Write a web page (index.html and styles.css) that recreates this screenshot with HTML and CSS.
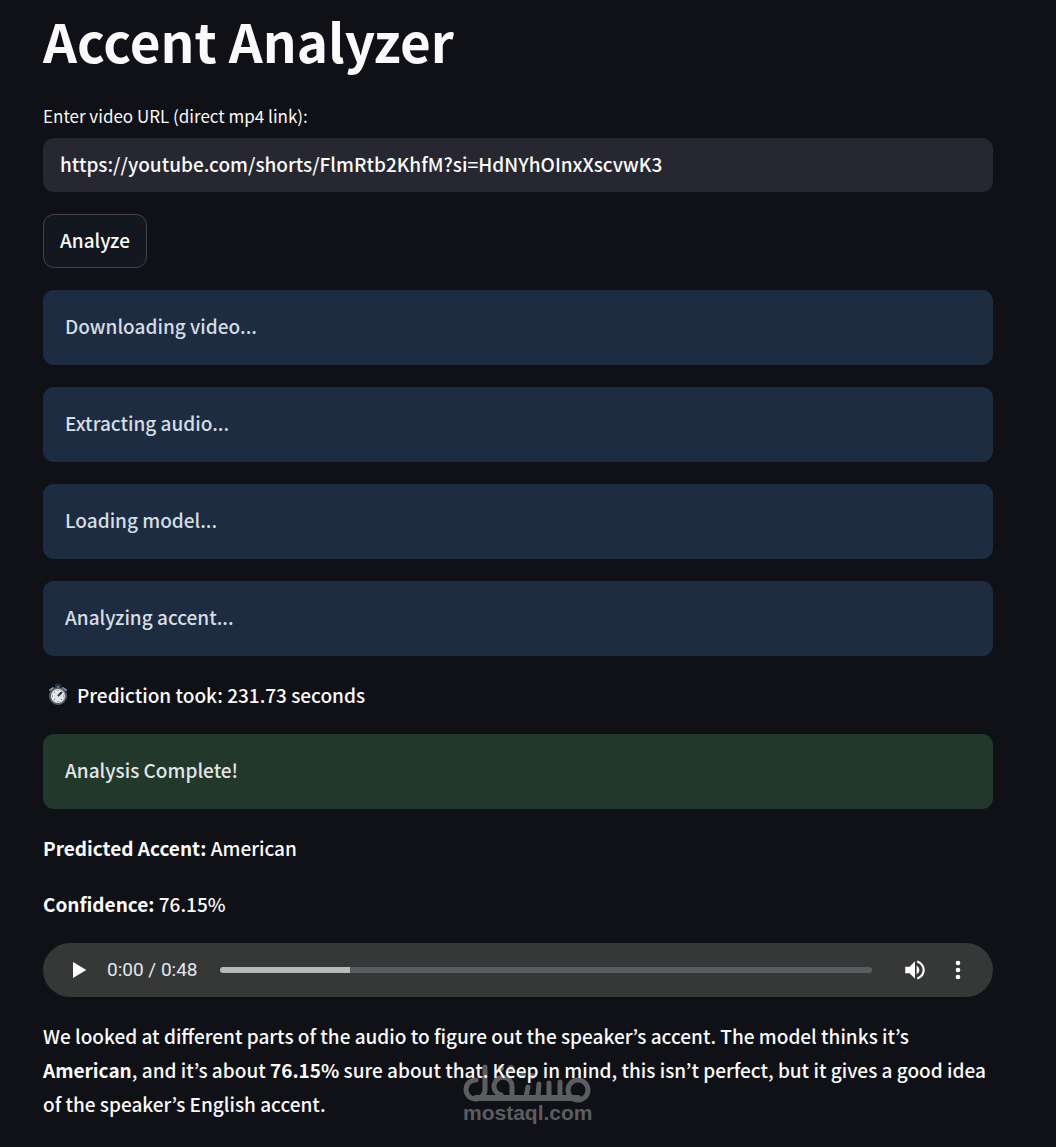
FILE: index.html
```html
<!DOCTYPE html>
<html lang="en">
<head>
<meta charset="utf-8">
<meta name="viewport" content="width=device-width, initial-scale=1">
<title>Accent Analyzer</title>
<link rel="stylesheet" href="styles.css">
</head>
<body>
<main class="page">
  <h1 class="title">Accent Analyzer</h1>
  <div class="field">
    <label class="field-label" for="url">Enter video URL (direct mp4 link):</label>
    <input class="field-input" id="url" type="text" value="https://youtube.com/shorts/FlmRtb2KhfM?si=HdNYhOInxXscvwK3">
  </div>
  <button class="button" type="button">Analyze</button>
  <div class="alert info">Downloading video...</div>
  <div class="alert info">Extracting audio...</div>
  <div class="alert info">Loading model...</div>
  <div class="alert info">Analyzing accent...</div>
  <p class="text timing">
    <svg class="stopwatch" viewBox="0 0 20 24" aria-hidden="true">
      <rect x="7" y="1" width="6" height="3" rx="1" fill="#26364a"/>
      <path d="M2 7l3-2M18 7l-3-2M10 4v3" stroke="#8b9299" stroke-width="2" stroke-linecap="round"/>
      <circle cx="10" cy="13" r="8" fill="#e1e5e6" stroke="#59626b" stroke-width="2"/>
      <path d="M10 13l4-4" stroke="#26303a" stroke-width="2"/>
      <path d="M10 7v1M10 18v1M4 13h1M15 13h1M6 9l1 1M6 17l1-1M13 16l1 1" stroke="#68727b"/>
    </svg>
    <span>Prediction took: 231.73 seconds</span>
  </p>
  <div class="alert success">Analysis Complete!</div>
  <p class="text"><strong>Predicted Accent:</strong> American</p>
  <p class="text"><strong>Confidence:</strong> 76.15%</p>
  <div class="player">
    <button class="icon-button" type="button" aria-label="Play">
      <svg width="32" height="32" viewBox="0 0 24 24"><path d="M7.500 6v12l10-6z" fill="#fff"/></svg>
    </button>
    <span class="time">0:00 / 0:48</span>
    <input class="seek" type="range" min="0" max="48" value="0" aria-label="Seek">
    <button class="icon-button" type="button" aria-label="Mute">
      <svg width="26" height="26" viewBox="0 0 24 24"><path d="M3 9v6h4l5 5V4L7 9zm10.500-1v8c1.500-.7 2.500-2.200 2.500-4s-1-3.300-2.500-4zM14 3.200v2.100c2.900.9 5 3.500 5 6.700s-2.100 5.800-5 6.700v2.100c4-.9 7-4.500 7-8.800s-3-7.900-7-8.800z" fill="#fff"/></svg>
    </button>
    <button class="icon-button" type="button" aria-label="More options">
      <svg width="28" height="28" viewBox="0 0 24 24"><path d="M12 8a2 2 0 1 0 0-4 2 2 0 0 0 0 4zm0 2a2 2 0 1 0 0 4 2 2 0 0 0 0-4zm0 6a2 2 0 1 0 0 4 2 2 0 0 0 0-4z" fill="#fff"/></svg>
    </button>
  </div>
  <p class="text">We looked at different parts of the audio to figure out the speaker’s accent. The model thinks it’s <strong>American</strong>, and it’s about <strong>76.15%</strong> sure about that. Keep in mind, this isn’t perfect, but it gives a good idea of the speaker’s English accent.</p>
  <div class="watermark">
    <svg class="watermark-logo" width="128" height="40" viewBox="0 0 128 40" role="img" aria-label="Mostaql">
      <g fill="none" stroke="currentColor" stroke-width="5" stroke-linecap="round">
        <path d="M13 17a9.500 9.500 0 1 0 9 10V4"/>
        <path d="M13 35h102" stroke-width="6"/>
        <path d="M38 32a9 9 0 1 1 11-9v10M65 24l-2 10M76 21l-1 12M86 20v13M97 19v14"/>
        <circle cx="115" cy="27" r="10"/>
      </g>
      <g fill="currentColor"><circle cx="38" cy="5" r="3"/><circle cx="48" cy="5" r="3"/><circle cx="60" cy="12" r="3"/><circle cx="69" cy="13" r="3"/></g>
    </svg>
    <span class="watermark-name">mostaql.com</span>
  </div>
</main>
</body>
</html>
```
FILE: styles.css
```css
* { box-sizing: border-box; }

body {
  margin: 0;
  background: #0f1116;
  color: #fafafa;
  font: 500 19px/34px "Noto Sans CJK KR", "Noto Sans", sans-serif;
}

.page {
  position: relative;
  display: flex;
  flex-direction: column;
  gap: 22px;
  padding: 4px 63px 26px 43px;
}

.title {
  margin: 0 0 4px;
  font-size: 53px;
  line-height: 72px;
  font-weight: 700;
}

.field { display: flex; flex-direction: column; gap: 8px; }
.field-label { font-size: 17px; line-height: 28px; font-weight: 400; }

.field-input {
  width: 100%;
  height: 54px;
  padding: 0 17px 3px;
  border: 0;
  border-radius: 11px;
  background: #262730;
  color: inherit;
  font: inherit;
}

.button {
  align-self: flex-start;
  height: 54px;
  padding: 0 16px 2px;
  border: 1px solid #41444c;
  border-radius: 11px;
  background: #131720;
  color: inherit;
  font: inherit;
}

.alert {
  padding: 19px 22px 22px;
  border-radius: 11px;
}
.info { background: #1e2c42; color: #d5dde2; }
.success { background: #22382b; color: #e2e6e8; }

.text { margin: 0; }
.timing { display: flex; align-items: center; gap: 9px; padding-left: 5px; }
.stopwatch { width: 20px; height: 24px; }

.player {
  display: flex;
  align-items: center;
  height: 54px;
  padding: 0 19px 0 20px;
  border-radius: 27px;
  background: #363837;
}

.icon-button {
  display: grid;
  place-items: center;
  width: 32px;
  height: 32px;
  padding: 0;
  border: 0;
  background: none;
}
.icon-button + .icon-button { margin-left: 11px; }

.time {
  margin-left: 12px;
  color: #e4e7ea;
  font: 19px/24px Roboto, sans-serif;
}

.seek {
  appearance: none;
  flex: 1;
  min-width: 0;
  height: 6px;
  margin: 0 27px 0 22px;
  border-radius: 3px;
  background: linear-gradient(90deg, #b7babd 20%, #5b5c61 20%);
}
.seek::-webkit-slider-thumb { appearance: none; width: 0; height: 0; }

.watermark {
  position: absolute;
  z-index: -1;
  left: 463px;
  bottom: 24px;
  display: flex;
  flex-direction: column;
  color: #5c5d60;
  pointer-events: none;
}
.watermark-name { font: bold 21px/20px "Liberation Sans", sans-serif; }
```
